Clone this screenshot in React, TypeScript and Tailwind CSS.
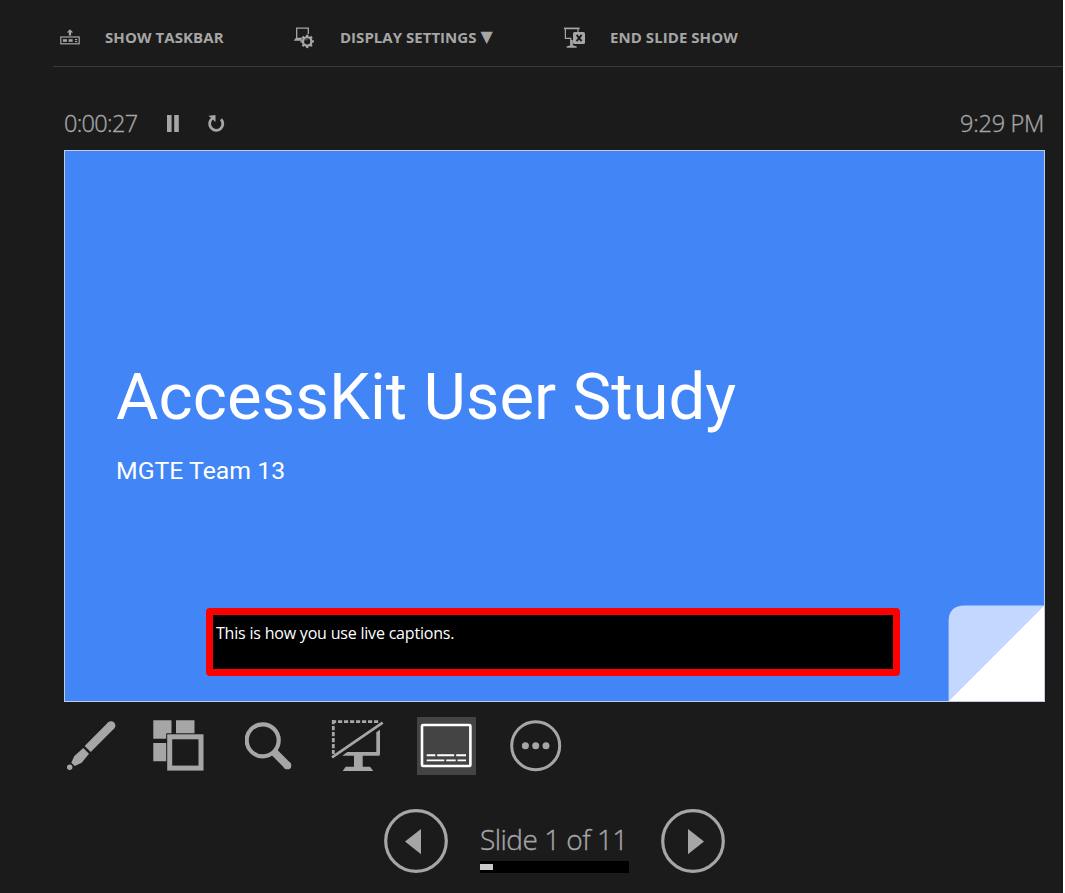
import type { ReactNode } from "react";

function TaskbarIcon() {
  return (
    <svg width="22" height="22" viewBox="0 0 22 22" fill="#a6a6a6">
      <path d="M11 2.2 14.2 5.6h-2.1v3H9.9v-3H7.8z" />
      <rect x="1.8" y="10" width="18.4" height="6.8" fill="none" stroke="#a6a6a6" strokeWidth="1.2" />
      <rect x="3.9" y="12.2" width="4" height="2.6" />
      <rect x="9.6" y="12.2" width="4" height="2.6" />
      <rect x="16" y="12" width="2.2" height="1.1" />
      <rect x="16" y="14" width="2.2" height="1.1" />
    </svg>
  );
}

function DisplayIcon() {
  const teeth = [0, 45, 90, 135, 180, 225, 270, 315];
  return (
    <svg width="22" height="22" viewBox="0 0 22 22" fill="none" stroke="#a6a6a6">
      <path d="M2.7 11V1.1h11.6V7" strokeWidth="1.3" />
      <path d="M2 10.8h6.4l-1.3 3H-.4z" fill="#a6a6a6" stroke="none" />
      <circle cx="13.2" cy="14.4" r="5.6" fill="#1b1b1b" stroke="none" />
      <circle cx="13.2" cy="14.4" r="4.2" strokeWidth="2.3" />
      {teeth.map((a) => (
        <path key={a} d="M13.2 7.7v2.4" strokeWidth="2.3" transform={`rotate(${a} 13.2 14.4)`} />
      ))}
      <path d="M10.4 12.8h3.4" strokeWidth="1" opacity=".5" />
    </svg>
  );
}

function EndShowIcon() {
  return (
    <svg width="22" height="22" viewBox="0 0 22 22">
      <path d="M0 1.4h15.6" stroke="#a6a6a6" strokeWidth="1.7" />
      <path d="M1.4 1.5v9.8h6M14 1.5V5M6.8 11v6.5" fill="none" stroke="#a6a6a6" strokeWidth="1.2" />
      <path d="M6.4 13h2.4v5.3l3.9 1.2v1.3H2.6v-1.3l3.8-1.2z" fill="#a6a6a6" />
      <rect x="9" y="5" width="12" height="12" rx="1.5" fill="#a6a6a6" />
      <path d="m12.6 7.8 5 6.4M17.6 7.8l-5 6.4" stroke="#1b1b1b" strokeWidth="1.9" />
    </svg>
  );
}

function RestartIcon() {
  return (
    <svg width="18" height="20" viewBox="0 0 18 20">
      <path d="M14 5.2A6.6 6.6 0 1 1 5.2 4.5" fill="none" stroke="#a6a6a6" strokeWidth="2.8" />
      <path d="M1.5 1.7 8.5 1v7z" fill="#a6a6a6" />
    </svg>
  );
}

function PenIcon() {
  return (
    <svg width="51" height="52" viewBox="0 0 51 52" fill="#a6a6a6">
      <path d="M21.7 29 45.3 5.3" stroke="#a6a6a6" strokeWidth="8.6" />
      <circle cx="45.1" cy="5.5" r="4.3" />
      <path d="m17.3 28 5.7 5.7-7.3 9-7 3.3-3.4-3.3 3-6.7z" />
      <circle cx="3.7" cy="47.3" r="2.7" />
    </svg>
  );
}

function SlidesIcon() {
  return (
    <svg width="51" height="51" viewBox="0 0 51 51" fill="#a6a6a6">
      <path d="M.3 .3h18.2v13h-5.3v5.5H.3zM23 .3h18.5v13H23zM.3 23h12.9v18.3H.3z" />
      <rect x="16.7" y="16.8" width="31.3" height="31.3" fill="none" stroke="#a6a6a6" strokeWidth="5" />
    </svg>
  );
}

function ZoomIcon() {
  return (
    <svg width="48" height="48" viewBox="0 0 48 48" fill="none" stroke="#a6a6a6">
      <circle cx="17.7" cy="18.3" r="16" strokeWidth="4.2" />
      <path d="m28 29 14.4 14.4" strokeWidth="7.8" />
      <circle cx="42.4" cy="43.4" r="3.9" fill="#a6a6a6" stroke="none" />
    </svg>
  );
}

function BlackScreenIcon() {
  return (
    <svg width="53" height="52" viewBox="0 0 53 52" fill="none" stroke="#a6a6a6">
      <path d="M1 1.7h48" strokeWidth="2.8" strokeDasharray="4.2 1.8" />
      <path d="M2.3 0v34" strokeWidth="2.8" strokeDasharray="4.2 1.8" />
      <path d="M1 37.3 51.7 2.7" strokeWidth="2.7" />
      <path
        d="M45.3 12.3 49 9.7v24.5q0 1.5-1.5 1.5H31.7v11H39l3.3 4.3H11.7l3-4.3H23v-11H11.3l5-3.7h29z"
        fill="#a6a6a6"
        stroke="none"
      />
    </svg>
  );
}

function CaptionsIcon() {
  return (
    <svg width="59" height="58" viewBox="0 0 59 58" fill="none" stroke="#fff">
      <rect x="5" y="8" width="48.4" height="41" rx="1" strokeWidth="2.6" />
      <path d="M9.7 38.3h8.6M20.2 38.3h17M39.2 38.3H49M9.7 43.4h17.6M29.2 43.4h9.5M40.5 43.4H49" strokeWidth="1.9" />
    </svg>
  );
}

function MoreIcon() {
  return (
    <svg width="52" height="52" viewBox="0 0 52 52" fill="#a6a6a6">
      <circle cx="25.7" cy="25.7" r="24" fill="none" stroke="#a6a6a6" strokeWidth="3" />
      <circle cx="15.4" cy="25.7" r="3.5" />
      <circle cx="25.7" cy="25.7" r="3.5" />
      <circle cx="36" cy="25.7" r="3.5" />
    </svg>
  );
}

function NavButton({ label, points }: { label: string; points: string }) {
  return (
    <button aria-label={label} className="h-16 w-16 shrink-0">
      <svg width="64" height="64" viewBox="0 0 64 64">
        <circle cx="32" cy="32" r="30.3" fill="none" stroke="#a6a6a6" strokeWidth="3.2" />
        <polygon points={points} fill="#a6a6a6" />
      </svg>
    </button>
  );
}

function MenuItem({ icon, className, children }: { icon: ReactNode; className: string; children: ReactNode }) {
  return (
    <button className={`flex shrink-0 items-center text-left ${className}`}>
      {icon}
      <span className="flex items-center pb-[2px] whitespace-nowrap">{children}</span>
    </button>
  );
}

export default function App() {
  return (
    <div className="h-[893px] w-[1065px] overflow-hidden border-r-2 border-white bg-[#1b1b1b] font-['Open_Sans','Noto_Sans',sans-serif] text-[#a6a6a6]">
      <header className="ml-[53px] flex h-[67px] border-b border-[#3a3a3a] pt-[10px] pl-[6px] text-[15px] leading-[22px] font-bold">
        <MenuItem className="w-[235px] gap-6" icon={<TaskbarIcon />}>
          <span className="tracking-[0.08px]">SHOW TASKBAR</span>
        </MenuItem>
        <MenuItem className="w-[270px] gap-6" icon={<DisplayIcon />}>
          <span className="tracking-[0.02px]">DISPLAY SETTINGS</span>
          <span className="ml-1 font-['DejaVu_Sans',sans-serif] text-[16px] font-normal">▼</span>
        </MenuItem>
        <MenuItem className="gap-6" icon={<EndShowIcon />}>
          <span className="tracking-[0.06px]">END SLIDE SHOW</span>
        </MenuItem>
      </header>

      <main className="ml-16 w-[981px]">
        <div className="flex h-[83px] items-end pb-[9px] text-[23.5px] leading-[34px] font-light tracking-[-0.7px]">
          <span className="mb-px w-[103px] [-webkit-text-stroke:0.35px_#a6a6a6]">0:00:27</span>
          <svg className="mb-[9px]" width="12" height="17" viewBox="0 0 12 17" fill="#a6a6a6">
            <path d="M0 0h4.6v17H0zM7.2 0h4.6v17H7.2z" />
          </svg>
          <span className="mb-[7px] ml-7">
            <RestartIcon />
          </span>
          <span className="mr-px mb-px ml-auto tracking-[-0.3px] [-webkit-text-stroke:0.35px_#a6a6a6]">9:29 PM</span>
        </div>

        <section className="relative flex h-[552px] flex-col border border-[#c3ccdc] bg-[#4285f6] font-[Roboto,sans-serif] text-white">
          <h1 className="mt-[206px] ml-[51px] text-[65.3px] leading-[80px] whitespace-nowrap">AccessKit User Study</h1>
          <p className="mt-[18px] ml-[51px] text-[24.8px] leading-[32px]">MGTE Team 13</p>
          <div className="mt-auto mb-[25px] ml-[141px] h-[68px] w-[694px] rounded border-[7px] border-[#ff0000] bg-black px-[3px] pt-[7px] font-['Open_Sans','Noto_Sans',sans-serif] text-base leading-[22px] tracking-[-0.2px]">
            This is how you use live captions.
          </div>
          <svg className="absolute right-0 bottom-0" width="96" height="96" viewBox="0 0 96 96">
            <path d="M.6 96V16.5Q.6 .5 16.6 .5H96z" fill="#c3d7ff" />
            <path d="M96 .5V96H.6z" fill="#fff" />
          </svg>
        </section>

        <div className="flex h-[87px] items-center">
          <span className="ml-[2px] w-[87px]"><PenIcon /></span>
          <span className="w-[92px]"><SlidesIcon /></span>
          <span className="w-[86px]"><ZoomIcon /></span>
          <span className="w-[86px]"><BlackScreenIcon /></span>
          <span className="mr-[34px] bg-[#444]"><CaptionsIcon /></span>
          <MoreIcon />
        </div>

        <div className="mt-5 ml-[320px] flex h-16">
          <NavButton label="Previous slide" points="37,20 21,32.6 37,45.3" />
          <div className="mx-8 flex w-[149px] flex-col">
            <span className="h-[52px] text-[28px] leading-[60px] font-light tracking-[-0.52px] whitespace-nowrap [-webkit-text-stroke:0.35px_#a6a6a6]">
              Slide 1 of 11
            </span>
            <div className="h-3 bg-black pt-[3px]">
              <div className="h-[6px] w-[13px] bg-[#c8c8c8]" />
            </div>
          </div>
          <NavButton label="Next slide" points="27,20 43,32.6 27,45.3" />
        </div>
      </main>
    </div>
  );
}
